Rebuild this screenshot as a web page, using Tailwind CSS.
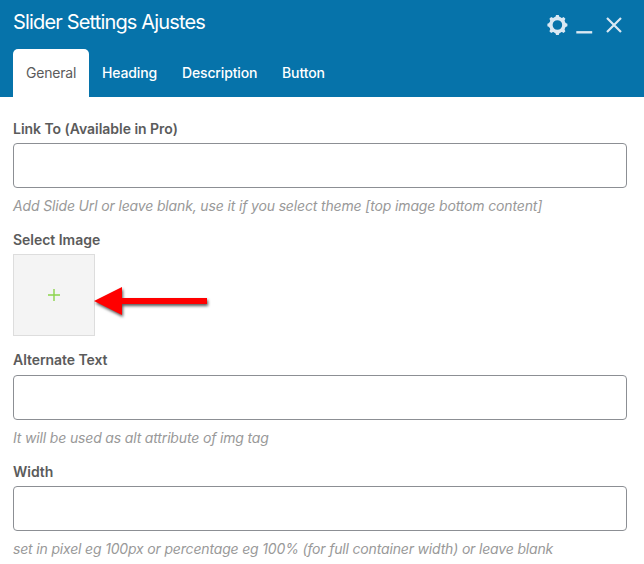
<!DOCTYPE html>
<html lang="en">
<head>
<meta charset="utf-8">
<title>Slider Settings Ajustes</title>
<script src="https://cdn.jsdelivr.net/npm/@tailwindcss/browser@4"></script>
</head>
<body class="w-[644px] h-[564px] overflow-hidden bg-white font-['Inter',sans-serif] text-[14px] leading-5 text-[#5b5b5b]">
<header class="h-[97px] bg-[#0673aa] text-white flex flex-col justify-between">
  <div class="flex justify-between pl-[13px] pr-[22px] pt-[9px]">
    <h1 class="text-[20px] leading-[26px] tracking-[-0.84px] whitespace-nowrap">Slider Settings Ajustes</h1>
    <svg class="w-[76px] h-[24px] mt-1" viewBox="546 13 76 24" fill="none" stroke="#dae8f3">
      <g transform="translate(557.4 25)">
        <circle r="6.5" stroke-width="3.4"/>
        <path fill="#dae8f3" stroke="none" fill-rule="evenodd" d="M-3.2-7Q-1.8-7.8-1.3-10H1.3Q1.8-7.8 3.2-7.3Q4.4-6.7 6.2-8L8-6.2Q6.7-4.4 7.3-3.2Q7.8-1.8 10-1.3V1.3Q7.8 1.8 7.3 3.2Q6.7 4.4 8 6.2L6.2 8Q4.4 6.7 3.2 7.3Q1.8 7.8 1.3 10H-1.3Q-1.8 7.8-3.2 7.3Q-4.4 6.7-6.2 8L-8 6.2Q-6.7 4.4-7.3 3.2Q-7.8 1.8-10 1.3V-1.3Q-7.8-1.8-7.3-3.2Q-6.7-4.4-8-6.2L-6.2-8Q-4.4-6.7-3.2-7ZM0-5.5A5.5 5.5 0 1 0 0 5.5A5.5 5.5 0 1 0 0-5.5Z"/>
      </g>
      <path stroke-width="2.4" d="M576.3 32.3H592.2"/>
      <path stroke-width="2.2" d="M607 18L621 32M621 18L607 32"/>
    </svg>
  </div>
  <nav class="flex h-12 pl-[13px] leading-[48px] font-medium whitespace-nowrap">
    <span class="w-[76px] pl-[13px] rounded-t-[5px] bg-white text-[#5b5b5b] font-normal tracking-[-0.2px]">General</span>
    <span class="w-[80px] pl-[13px] tracking-[-0.15px]">Heading</span>
    <span class="w-[100px] pl-[13px] tracking-[-0.15px]">Description</span>
    <span class="w-[70px] pl-[13px] tracking-[-0.1px]">Button</span>
  </nav>
</header>
<main class="pl-[13px] pr-[17px] pt-[22px] whitespace-nowrap">
  <section class="h-[111px]">
    <label class="block h-6 font-semibold tracking-[-0.03px]" for="link">Link To (Available in Pro)</label>
    <input id="link" class="block w-full h-[45px] rounded border border-[#8c8f94] bg-white">
    <p class="mt-2 italic text-[#999] tracking-[-0.15px]">Add Slide Url or leave blank, use it if you select theme [top image bottom content]</p>
  </section>
  <section class="h-[120px]">
    <div class="h-6 font-semibold tracking-[-0.03px]">Select Image</div>
    <div class="flex">
      <div class="w-[82px] h-[82px] border border-[#ddd] bg-[#f4f4f4] flex items-center justify-center">
        <svg class="w-3 h-3" viewBox="0 0 12 12" stroke="#8bd34b" stroke-width="1.4"><path d="M0 6H12M6 0V12"/></svg>
      </div>
      <svg class="-ml-px mt-[28px] w-[120px] h-[40px] overflow-visible drop-shadow-[1px_2px_1.5px_rgba(0,0,0,0.65)]" viewBox="94 282 120 40"><path fill="#f00" d="M94 301L122 287V298H207V304H122V315Z"/></svg>
    </div>
  </section>
  <section class="h-[112px]">
    <label class="block h-[25px] font-semibold tracking-[-0.06px]" for="alt">Alternate Text</label>
    <input id="alt" class="block w-full h-[45px] rounded border border-[#8c8f94] bg-white">
    <p class="mt-2 italic text-[#999] tracking-[-0.16px]">It will be used as alt attribute of img tag</p>
  </section>
  <section>
    <label class="block h-6 font-semibold tracking-[-0.03px]" for="width">Width</label>
    <input id="width" class="block w-full h-[45px] rounded border border-[#8c8f94] bg-white">
    <p class="mt-2 italic text-[#999] tracking-[-0.17px]">set in pixel eg 100px or percentage eg 100% (for full container width) or leave blank</p>
  </section>
</main>
</body>
</html>
